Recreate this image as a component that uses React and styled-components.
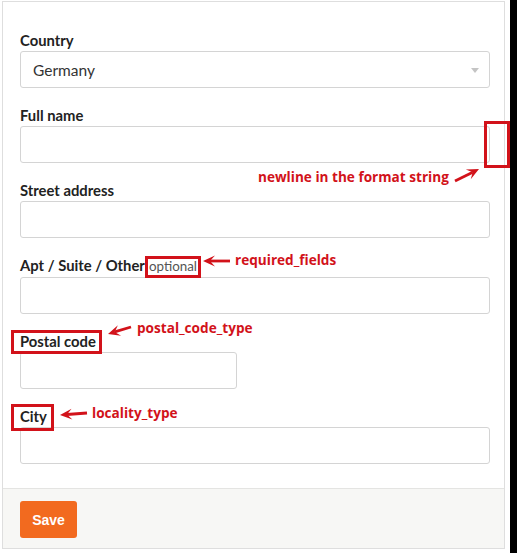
import React from 'react';
import styled, { createGlobalStyle } from 'styled-components';

const GlobalStyle = createGlobalStyle`
  html, body {
    margin: 0;
    padding: 0;
    background: #fff;
  }
  body {
    font-family: 'Lato', 'Liberation Sans', sans-serif;
    color: #222;
  }
`;

const RED = '#d2121a';

const Page = styled.div`
  position: relative;
  display: flex;
  width: 517px;
  height: 553px;
  overflow: hidden;
`;

const Frame = styled.div`
  flex: 1;
  padding: 1px 5px 4px 2px;
`;

const Edge = styled.div`
  width: 7px;
  background: #000;
`;

const Panel = styled.form`
  border: 1px solid #dedede;
  background: #fff;
  display: flex;
  flex-direction: column;
`;

const Body = styled.div`
  padding: 29px 14px 24px 17px;
  display: flex;
  flex-direction: column;
  gap: 18px;
`;

const Field = styled.div`
  display: flex;
  flex-direction: column;
  gap: 2px;
`;

const Label = styled.label`
  position: relative;
  align-self: flex-start;
  display: flex;
  align-items: baseline;
  gap: 4px;
  font-size: 14.8px;
  line-height: 18px;
  font-weight: 700;
  color: #222;
`;

const Optional = styled.span`
  position: relative;
  font-size: 13.4px;
  font-weight: 400;
  color: #555;
`;

const Mark = styled.span`
  position: absolute;
  top: ${p => p.$t}px;
  right: ${p => p.$r}px;
  bottom: ${p => p.$b}px;
  left: ${p => p.$l}px;
  border: 3px solid ${RED};
  pointer-events: none;
`;

const Input = styled.input`
  box-sizing: border-box;
  width: ${p => p.$w || '100%'};
  height: 37px;
  border: 1px solid #d4d4d4;
  border-radius: 3px;
  background: #fff;
  font: inherit;
  font-size: 15px;
  padding: 0 12px;
  outline: none;
`;

const SelectBox = styled.div`
  box-sizing: border-box;
  height: 37px;
  border: 1px solid #d4d4d4;
  border-radius: 3px;
  display: flex;
  align-items: center;
  justify-content: space-between;
  padding: 0 10px 0 12px;
  font-size: 15.5px;
  color: #333;
`;

const Caret = styled.span`
  width: 0;
  height: 0;
  border-left: 4px solid transparent;
  border-right: 4px solid transparent;
  border-top: 5px solid #c4c4c4;
  margin-top: 2px;
`;

const Footer = styled.div`
  background: #f7f7f5;
  border-top: 1px solid #e4e4e2;
  padding: 12px 17px 10px;
`;

const SaveButton = styled.button`
  width: 57px;
  height: 37px;
  border: none;
  border-radius: 3px;
  background: #f26a1f;
  color: #fff;
  font-family: 'Liberation Sans', Arial, sans-serif;
  font-weight: 700;
  font-size: 14px;
`;

const Note = styled.span`
  position: absolute;
  left: ${p => p.$x}px;
  top: ${p => p.$y}px;
  font-family: 'Open Sans', 'DejaVu Sans', sans-serif;
  font-weight: 700;
  font-size: 13.6px;
  line-height: 18px;
  color: ${RED};
  white-space: nowrap;
`;

const Box = styled.span`
  position: absolute;
  left: 484px;
  top: 121px;
  width: 20px;
  height: 41px;
  border: 3px solid ${RED};
`;

const Overlay = styled.svg`
  position: absolute;
  left: 0;
  top: 0;
  pointer-events: none;
`;

const Arrow = ({ x1, y1, x2, y2 }) => {
  const ang = Math.atan2(y2 - y1, x2 - x1);
  const c = Math.cos(ang);
  const s = Math.sin(ang);
  const px = (a, b) => x2 + a * c - b * s;
  const py = (a, b) => y2 + a * s + b * c;
  const pt = (a, b) => `${px(a, b)},${py(a, b)}`;
  return (
    <g fill={RED} stroke={RED}>
      <line x1={x1} y1={y1} x2={px(-7, 0)} y2={py(-7, 0)} strokeWidth="2.8" />
      <polygon points={`${pt(0, 0)} ${pt(-12, -5.5)} ${pt(-7, 0)} ${pt(-12, 5.5)}`} stroke="none" />
    </g>
  );
};

export default function App() {
  return (
    <Page>
      <GlobalStyle />
      <Frame>
        <Panel onSubmit={e => e.preventDefault()}>
          <Body>
            <Field>
              <Label>Country</Label>
              <SelectBox>
                Germany
                <Caret />
              </SelectBox>
            </Field>
            <Field>
              <Label>Full name</Label>
              <Input />
            </Field>
            <Field>
              <Label>Street address</Label>
              <Input />
            </Field>
            <Field>
              <Label>
                Apt / Suite / Other
                <Optional>
                  optional
                  <Mark $t={-1} $r={-4} $b={-3} $l={-4} />
                </Optional>
              </Label>
              <Input />
            </Field>
            <Field>
              <Label>
                Postal code
                <Mark $t={-2} $r={-6} $b={-4} $l={-9} />
              </Label>
              <Input $w="217px" />
            </Field>
            <Field>
              <Label>
                City
                <Mark $t={-3} $r={-7} $b={-6} $l={-9} />
              </Label>
              <Input />
            </Field>
          </Body>
          <Footer>
            <SaveButton type="submit">Save</SaveButton>
          </Footer>
        </Panel>
      </Frame>
      <Edge />
      <Box />
      <Note $x={258} $y={168}>newline in the format string</Note>
      <Note $x={235} $y={251}>required_fields</Note>
      <Note $x={137} $y={319}>postal_code_type</Note>
      <Note $x={92} $y={404}>locality_type</Note>
      <Overlay width="517" height="553">
        <Arrow x1={455} y1={181} x2={479} y2={169} />
        <Arrow x1={230} y1={261} x2={203} y2={261} />
        <Arrow x1={131} y1={327} x2={108} y2={334} />
        <Arrow x1={87} y1={413} x2={60} y2={415} />
      </Overlay>
    </Page>
  );
}
